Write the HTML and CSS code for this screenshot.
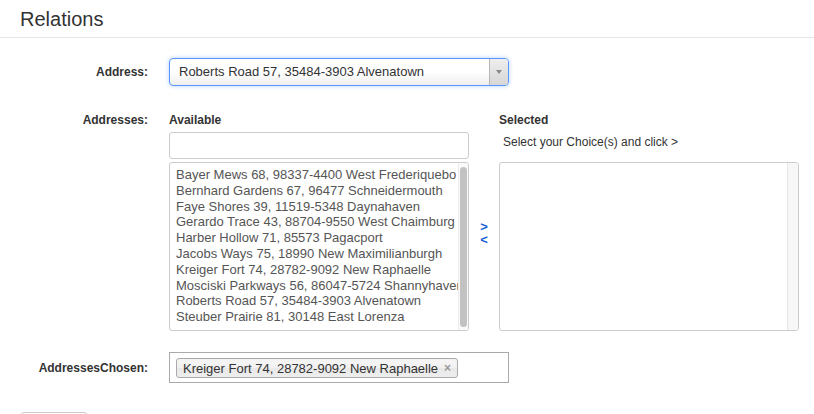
FILE: index.html
```html
<!DOCTYPE html>
<html>
<head>
<meta charset="utf-8">
<link rel="stylesheet" href="styles.css">
</head>
<body>
<h1 class="page-header">Relations</h1>
<form class="form">
  <div class="row row-address">
    <label class="label">Address:</label>
    <div class="select">
      <span class="select-text">Roberts Road 57, 35484-3903 Alvenatown</span>
      <span class="select-arrow"><span class="tri"></span></span>
    </div>
  </div>

  <div class="row row-addresses">
    <label class="label label-top">Addresses:</label>
    <div class="transfer">
      <div class="col-head">Available</div>
      <div></div>
      <div class="col-head">Selected</div>

      <input class="search" type="text">
      <div></div>
      <div class="hint">Select your Choice(s) and click &gt;</div>

      <div class="listbox">
        <div class="items">
          <div>Bayer Mews 68, 98337-4400 West Frederiquebo</div>
          <div>Bernhard Gardens 67, 96477 Schneidermouth</div>
          <div>Faye Shores 39, 11519-5348 Daynahaven</div>
          <div>Gerardo Trace 43, 88704-9550 West Chaimburg</div>
          <div>Harber Hollow 71, 85573 Pagacport</div>
          <div>Jacobs Ways 75, 18990 New Maximilianburgh</div>
          <div>Kreiger Fort 74, 28782-9092 New Raphaelle</div>
          <div>Mosciski Parkways 56, 86047-5724 Shannyhaven</div>
          <div>Roberts Road 57, 35484-3903 Alvenatown</div>
          <div>Steuber Prairie 81, 30148 East Lorenza</div>
        </div>
        <div class="track"><div class="thumb"></div></div>
      </div>
      <div class="arrows">
        <a class="arrow">&gt;</a>
        <a class="arrow">&lt;</a>
      </div>
      <div class="listbox listbox-selected">
        <div class="items"></div>
        <div class="track track-empty"></div>
      </div>
    </div>
  </div>

  <div class="row row-chosen">
    <label class="label">AddressesChosen:</label>
    <div class="chosen">
      <span class="chip">Kreiger Fort 74, 28782-9092 New Raphaelle<span class="chip-x">&#215;</span></span>
    </div>
  </div>

  <div class="actions"><button type="button" class="btn" aria-label="Save"></button></div>
</form>
</body>
</html>
```

FILE: styles.css
```css
* { box-sizing: border-box; }

body {
  margin: 0;
  font-family: "Liberation Sans", Arial, Helvetica, sans-serif;
  color: #333;
  background: #fff;
}

.page-header {
  margin: 0;
  height: 38px;
  padding: 1px 0 0 20px;
  font-size: 20px;
  font-weight: normal;
  line-height: 36px;
  color: #333;
  border-bottom: 1px solid #e5e5e5;
}

.form {
  padding-top: 20px;
}

.row {
  display: grid;
  grid-template-columns: 148px auto;
  column-gap: 21px;
  align-items: center;
  justify-content: start;
}

.label {
  text-align: right;
  font-size: 12px;
  font-weight: bold;
  line-height: 16px;
  color: #333;
}

.label-top {
  align-self: start;
}

/* Address select */
.select {
  width: 340px;
  height: 28px;
  display: flex;
  border: 1px solid #5897fb;
  border-radius: 4px;
  box-shadow: 0 0 4px rgba(88, 151, 251, 0.45);
  background: linear-gradient(#ffffff 0%, #ffffff 50%, #eeeeee 100%);
  overflow: hidden;
}

.select-text {
  flex: 1;
  padding-left: 9px;
  font-size: 13px;
  line-height: 26px;
  color: #333;
}

.select-arrow {
  width: 19px;
  border-left: 1px solid #b5b5b5;
  background: linear-gradient(#eeeeee, #d6d6d6);
  display: flex;
  align-items: center;
  justify-content: center;
}

.tri {
  width: 0;
  height: 0;
  border-left: 3px solid transparent;
  border-right: 3px solid transparent;
  border-top: 4px solid #888;
}

/* Transfer widget */
.row-addresses {
  margin-top: 26px;
  align-items: start;
}

.transfer {
  display: grid;
  grid-template-columns: 300px 30px 300px;
  grid-template-rows: 16px 27px 168px;
  row-gap: 4px;
}

.col-head {
  font-size: 12px;
  font-weight: bold;
  line-height: 16px;
  color: #333;
}

.search {
  margin: 0;
  width: 300px;
  height: 27px;
  border: 1px solid #ccc;
  border-radius: 3px;
  background: #fff;
  font: 13px "Liberation Sans", Arial, sans-serif;
  padding: 0 6px;
}

.hint {
  padding: 2px 0 0 4px;
  font-size: 12px;
  line-height: 16px;
  color: #333;
}

.listbox {
  margin-top: -1px;
  height: 169px;
  display: flex;
  border: 1px solid #ccc;
  border-radius: 3px;
  background: #fff;
  overflow: hidden;
}

.items {
  flex: 1;
  min-width: 0;
  overflow: hidden;
  padding: 4px 0 0 6px;
  font-size: 13px;
  line-height: 15.8px;
  color: #555;
  white-space: nowrap;
}

.track {
  width: 10px;
  border-left: 1px solid #ececec;
  background: #fafafa;
  padding: 4px 1px 3px 1px;
}

.thumb {
  width: 7px;
  height: 100%;
  border-radius: 4px;
  background: #c2c2c2;
}

.track-empty {
  width: 11px;
  background: #f7f7f7;
  border-left: 1px solid #e6e6e6;
}

.arrows {
  display: flex;
  flex-direction: column;
  align-items: center;
  justify-content: center;
  padding-bottom: 28px;
}

.arrow {
  font-size: 13px;
  font-weight: bold;
  line-height: 13.5px;
  color: #1560d6;
  cursor: pointer;
}

/* Chosen */
.row-chosen {
  margin-top: 21px;
}

.chosen {
  width: 340px;
  height: 31px;
  border: 1px solid #aaa;
  background: #fff;
  padding: 5px 0 0 6px;
}

.chip {
  display: inline-flex;
  align-items: center;
  height: 20px;
  padding: 0 6px 0 6px;
  border: 1px solid #aaa;
  border-radius: 3px;
  background: linear-gradient(#f4f4f4 20%, #f0f0f0 50%, #e8e8e8 52%, #eeeeee 100%);
  font-size: 13px;
  color: #333;
  white-space: nowrap;
}

.chip-x {
  margin-left: 6px;
  font-size: 12px;
  font-weight: bold;
  color: #999;
}

.actions {
  margin: 29px 0 0 20px;
}

.btn {
  display: block;
  width: 68px;
  height: 28px;
  border: 1px solid #ccc;
  border-radius: 4px;
  background: linear-gradient(#ffffff, #e6e6e6);
}
```
